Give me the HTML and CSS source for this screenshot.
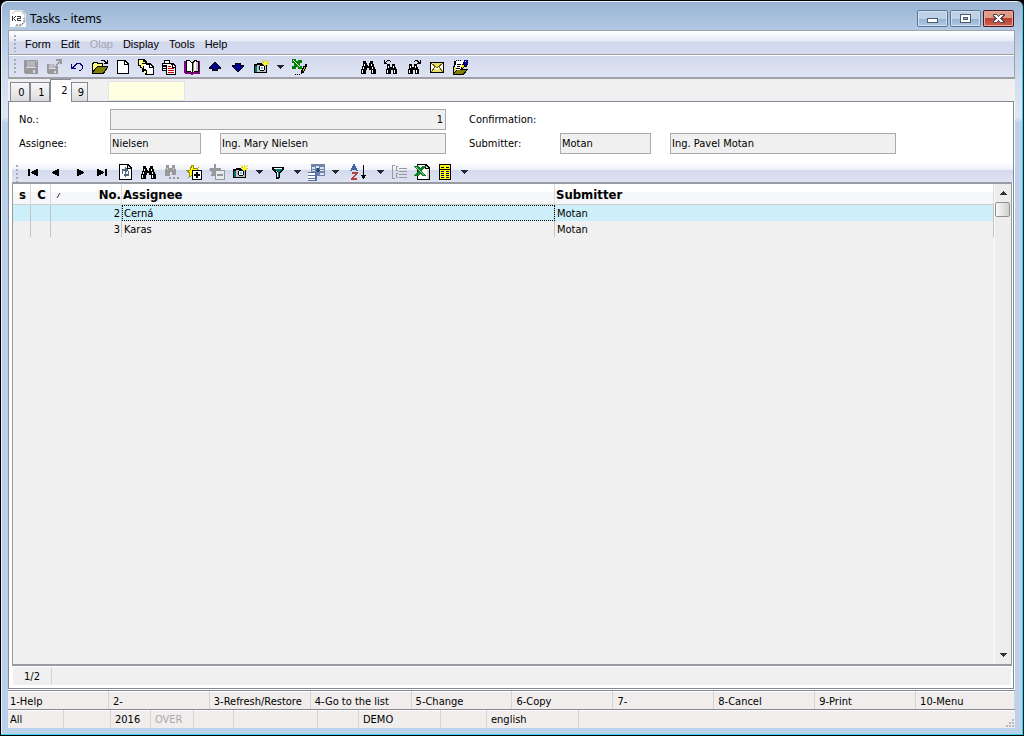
FILE: index.html
```html
<!DOCTYPE html>
<html lang="en">
<head>
<meta charset="utf-8">
<title>Tasks - items</title>
<link rel="stylesheet" href="styles.css">
</head>
<body>
<svg class="sprite" aria-hidden="true">
  <symbol id="save"><path fill="#999" d="M1 1h14v14H2l-1-1z"/><path fill="#b4b6bd" d="M4 2h8v6H4z"/><path fill="#d8dcee" d="M3 8h10v1H3zM10 11h2v3h-2zM13 2h1v1h-1z"/></symbol>
  <symbol id="export"><path fill="#999" d="M1 5h8v2h3v8H2l-1-1zM10 0h6v5h-2V3l-4 4-1-1 4-4h-3z"/><path fill="#b9bcc8" d="M3 5h6v4H3z"/><path fill="#d8dcee" d="M3 9h7v1H3zM8 12h2v2H8z"/></symbol>
  <symbol id="undo"><path fill="#000080" d="M2 5h1v3h1V7h1V6h1V5h1V4h5v1h1v1h1v4h-1v1h-1v1h-2v-1h2v-1h1V7h-1V6h-1V5H8v1H7v1H6v1H5v1h2v1H2z"/></symbol>
  <symbol id="open"><path d="M0 4h1V3h5v1h5v3h5v1l-4 7H0z"/><path fill="#ffff80" d="M1 5h1V4h3v1h5v2H5L1 12z"/><path fill="#808000" d="M5 8h10l-4 6H1z"/><path d="M9 1h4v1h1v1h1V1h1v4h-4V4h1V3h-1V2H9z"/></symbol>
  <symbol id="new"><path d="M2 1h8l4 4v10H2z"/><path fill="#fff" d="M3 2h6v4h4v8H3z"/><path fill="#fff" d="M10 3l2 2h-2z"/></symbol>
  <symbol id="copy"><path d="M0 0h6l3 3v1h3l4 4v8H7v-3H4V9H2V7H0z"/><path fill="#ffff80" d="M1 1h4v2h2v1H4v4H3V6H1zM4 5h3v2H5v5h3v2H6v-2H5V9H4z"/><path fill="#fff" d="M8 6h3v3h4v6H9v-4H8zM12 6l2 2h-2zM6 5h2v5H6z"/></symbol>
  <symbol id="paste"><path d="M1 4h2V1h6v3h3l3 3v9H5v-4H1z"/><path fill="#fff" d="M2 5h8v2H8v4H6V6H2zM4 2h4v2H4zM6 6h5v3h3v6H6zM2 8h3v3H2zM12 6l2 2h-2z"/><path fill="#d00000" d="M7 7h3v1H7zM7 9h6v1H7zM7 11h6v1H7zM7 13h6v1H7z"/><path d="M2 6h3v1H2zM2 9h3v1H2z"/></symbol>
  <symbol id="book"><path fill="#800080" d="M0 2h2v11h5l1 1 1-1h6V2h1v13h-6l-2 1-2-1H1l-1-1z"/><path d="M2 1h3l3 2 3-2h2v1h2v11h-5l-2 1-2-1H2z"/><path fill="#fff" d="M3 2h2l3 2v9l-2-1H3zM9 4l2-2h1v10h-1l-2 1z"/><path fill="#c8c8c8" d="M12 3h2v9h-2z"/><path fill="#a0a060" d="M9 4h1v8H9z"/></symbol>
  <symbol id="up"><path d="M7 3h2v1h1v1h1v1h1v1h1v1h1v2h-3v2H5v-2H2V8h1V7h1V6h1V5h1V4h1z"/><path fill="#000090" d="M7 4h2v1h1v1h1v1h1v1h1v1h-3v2H6V9H3V8h1V7h1V6h1V5h1z"/></symbol>
  <symbol id="down"><path d="M5 4h6v2h3v2h-1v1h-1v1h-1v1h-1v1H9v1H7v-1H6v-1H5v-1H4V9H3V8H2V6h3z"/><path fill="#000090" d="M6 5h4v2h3v1h-1v1h-1v1h-1v1H9v1H7v-1H6v-1H5V9H4V8H3V7h3z"/></symbol>
  <symbol id="camera"><path d="M1 5h3V4h5v1h5v9H1z"/><path fill="#007878" d="M2 7h2v6H2z"/><path fill="#c0c0c0" d="M4 6h9v7H4z"/><path d="M6 7h1V6h4v1h1v4h-1v1H7v-1H6z"/><path fill="#fff" d="M7 7h4v4H7z"/><path fill="#66c8d8" d="M8 8h2v2H8z"/><path fill="#e0d000" d="M9 1h1v1h1v1h1V1h1v2h1V2h1V1h1v1h-1v1h-1v1h2v1h-2v1h1v1h-1V6h-1v1h-1V5h-1v1h-1V5h1V4H9V3h1V2H9z"/><path fill="#ff0" d="M11 3h3v3h-3z"/></symbol>
  <symbol id="check-excel"><path fill="#008000" d="M1 0h4v2h2V1h4v3H9v3h2v3H7V8H5v2H1V7h2V4H1z"/><path fill="#fff" d="M2 1h1v1h1v1h1v1h1v1h1v1h1v1h1v1H8V7H7V6H6V5H5V4H4V3H3V2H2z"/><path d="M14 5h2v3h-1v2h-1v2h-1v2h-2v1h-1v-4h1V9h1V7h2zM4 15h1v1H4zM6 15h1v1H6zM8 15h1v1H8z"/><path fill="#e6c800" d="M13 8h1v2h-1v2h-1v-2h1z"/></symbol>
  <symbol id="find"><path d="M3 2h3v2h1v2h2V4h1V2h3v3h1v3h1v2h1v5h-5v-4H9V9H7v2H6v4H1v-5h1V7h1z"/><path fill="#fff" d="M4 5h1v2H4zM3 8h1v2H3zM2 11h1v3H2zM11 5h1v2h-1zM12 8h1v2h-1zM12 11h1v3h-1zM8 6h1v1H8z"/></symbol>
  <symbol id="find-prev"><path d="M4 5h3v3h2V5h3v3h1v2h1v5h-4v-4H8v4H3v-5h1z"/><path fill="#fff" d="M5 7h1v2H5zM4 11h1v3H4zM10 7h1v2h-1zM11 11h1v3h-1z"/><path d="M1 1h1v2h1V2h1V1h3v1h1v1H7V2H4v1H3v1h1v1H1z"/></symbol>
  <symbol id="find-next"><path d="M3 5h3v3h2V5h3v3h1v2h1v5H9v-4H7v4H2v-5h1z"/><path fill="#fff" d="M4 7h1v2H4zM3 11h1v3H3zM9 7h1v2H9zM10 11h1v3h-1z"/><path d="M14 1h1v4h-4V4h1V3h-1V2H9v1H8V2h1V1h3v1h1v1h1z"/></symbol>
  <symbol id="mail"><path d="M1 3h14v11H1z"/><path fill="#fff" d="M2 4h12v9H2z"/><path fill="#e8dc70" d="M3 4h10L8 9zM2 12l3-3 3 2 3-2 3 3v1H2z"/><path fill="none" stroke="#706000" d="M2 4l6 5 6-5M2 13l4-5M14 13l-4-5"/></symbol>
  <symbol id="notes"><path d="M2 2h9v8h5l-4 6H1V7h1z"/><path fill="#fff" d="M4 2h7v8L5 11H3z"/><path fill="#e6d85a" d="M2 8h2v3l-2 3z"/><path fill="#808000" d="M5 11h9l-3 4H2z"/><path d="M4 1h1v1H4zM6 1h1v1H6zM8 1h1v1H8zM5 5h4v1H5zM5 7h3v1H5zM4 9h4v1H4zM11 3h4v5h-3l-2 2-2-1 2-2z"/><path fill="#ffe000" d="M9 7l2-2 1 2-2 2z"/><path fill="#000090" d="M12 1h4v5h-4z"/><path fill="#fff" d="M13 2h1v1h-1z"/></symbol>
  <symbol id="caret"><path fill="#202830" d="M1 2h7v1H7v1H6v1H5v1H4V5H3V4H2V3H1z"/></symbol>
  <symbol id="first"><path d="M3 5h2v7H3zM6 8h1V7h2V6h2V5h2v7h-2v-1H9v-1H7V9H6z"/></symbol>
  <symbol id="prev"><path d="M4 8h1V7h2V6h2V5h2v7H9v-1H7v-1H5V9H4z"/></symbol>
  <symbol id="next"><path d="M13 8h-1V7h-2V6H8V5H6v7h2v-1h2v-1h2V9h1z"/></symbol>
  <symbol id="last"><path d="M13 5h-2v7h2zM10 8H9V7H7V6H5V5H3v7h2v-1h2v-1h2V9h1z"/></symbol>
  <symbol id="refresh"><path d="M2 0h9l4 4v12H2z"/><path fill="#fff" d="M3 1h7v4h4v10H3z"/><path fill="#d8e0e8" d="M11 2l2 2h-2z"/><path fill="#54687c" d="M5 5h3V3l3 3-3 3V7H6v3H5zM12 7v5H9v2l-3-3 3-3v2h2V7z"/></symbol>
  <symbol id="find-more"><path fill="#999" d="M3 1h3v3h3V1h3v4h1v6h-4V8H7v4H2V5h1zM6 13h2v2H6zM10 13h2v2h-2zM14 13h2v2h-2z"/><path fill="#c4c8d4" d="M4 4h1v2H4zM10 4h1v2h-1z"/></symbol>
  <symbol id="star-add"><path fill="#ff0" stroke="#a09000" d="M6 1h1v4l5-1-2 4 2 4-5-1-4 2 1-4-4-3h4z"/><path fill="#fff" stroke="#000" d="M6.500 6.500h9v9h-9z"/><path d="M8 10h2V8h2v2h2v2h-2v2h-2v-2H8z"/></symbol>
  <symbol id="star-remove"><path fill="#999" d="M5 0h2v4h5v2h4v10H6v-4H2l1-3-3-3 1-2h4z"/><path fill="#e8eaf2" d="M7 7h8v8H7z"/><path fill="#999" d="M8 10h6v2H8z"/></symbol>
  <symbol id="filter"><path d="M2 3h12v3h-1v1h-1v1h-1v1h-1v5H9v1H6V9H5V8H4V7H3V6H2z"/><path fill="#fff" d="M4 4h8v1H4zM6 7h1v1h1v5H7V8H6z"/><path fill="#008080" d="M5 5h7v1h-1v1h-1v1H9v5H8V7H6V6H5z"/></symbol>
  <symbol id="forms"><path fill="#7182a8" d="M3 0h14v12H3z"/><path fill="#dbe6f5" d="M4 3h3v2H4zM8 2h3v2H8zM12 3h4v2h-4zM12 6h4v1h-4zM12 9h4v2h-4zM4 6h3v1H4z"/><path fill="#1a4770" d="M9 4h2v2h1v1h-1v1H9V7H8V6h1z"/><path fill="#5770a8" d="M0 8h9v9H0z"/><path fill="#fff" d="M0 9h7v2H0zM0 12h7v2H0zM0 15h7v1H0z"/></symbol>
  <symbol id="sort"><path fill="none" stroke="#4166a8" stroke-width="1.500" d="M1 7l3-6 3 6M2 5h4"/><path fill="none" stroke="#b04038" stroke-width="1.500" d="M2 9h5l-5 6h5"/><path d="M13 1h1v10h2l-2 4h-1l-2-4h2z"/></symbol>
  <symbol id="outline"><path fill="none" stroke="#999" d="M4 1.500H1.500v13H4M7 2.500H5.500v4H7M7 9.500H5.500v4H7M8 4.500h8M8 7.500h8M8 10.500h8M8 13.500h8"/></symbol>
  <symbol id="excel"><path d="M3 0h9l4 4v12H3z"/><path fill="#fff" d="M4 1h7v4h4v10H4z"/><path fill="#d8d8d8" d="M12 2l2 2h-2zM13 6h2v9h-2z"/><path fill="#117d28" d="M0 2h4l2 2 2-2h4L8 7l4 5H8l-2-2-2 2H0l4-5z"/><path fill="#9bd39b" d="M2 3h1l7 8H9z"/></symbol>
  <symbol id="columns"><path d="M2 0h12v16H2z"/><path fill="#ff0" d="M3 1h10v14H3z"/><path d="M4 3h3v1H4zM9 3h3v1H9zM3 5h10v1H3z"/><path fill="#000080" d="M4 7h3v1H4zM9 7h3v1H9zM4 9h3v1H4zM9 9h3v1H9zM4 11h3v1H4zM9 11h3v1H9zM4 13h3v1H4zM9 13h3v1H9z"/></symbol>
</svg>

<div class="window">
  <header class="titlebar">
    <svg class="app-icon" viewBox="0 0 16 17"><path fill="#fff" d="M0 0h12l4 4v13H0z"/><path fill="none" stroke="#bbb" d="M2 4l3-3h6l4 4v7l-4 4H5"/><path fill="none" stroke="#666" stroke-dasharray="2 1" d="M6 15h5l3-3V8"/><path fill="#ccc" d="M12 0l4 4h-4z"/><path fill="none" stroke="#333" d="M2.500 6v5M6 6L3.500 8.500 6 11M7 6.500h3.500v2h-3v2H11"/></svg>
    <h1 class="title">Tasks - items</h1>
    <div class="window-buttons">
      <button class="win-btn" aria-label="Minimize"><svg viewBox="0 0 31 17"><path fill="#fff" stroke="#4c5a6b" d="M10.500 8.500h10v4h-10z"/></svg></button>
      <button class="win-btn" aria-label="Maximize"><svg viewBox="0 0 31 17"><path fill="#fff" stroke="#4c5a6b" d="M10.500 4.500h10v8h-10z"/><path fill="#8fb0d3" stroke="#4c5a6b" d="M13.500 7.500h4v2h-4z"/></svg></button>
      <button class="win-btn close" aria-label="Close"><svg viewBox="0 0 31 17"><path fill="#fff" stroke="#554852" d="M10 4.500h3.500l2 2 2-2H21v1l-3 3 3 3v1h-3.500l-2-2-2 2H10v-1l3-3-3-3z"/></svg></button>
    </div>
  </header>

  <div class="client">
    <nav class="menu">
      <button>Form</button><button>Edit</button><button disabled>Olap</button><button>Display</button><button>Tools</button><button>Help</button>
    </nav>
    <div class="toolbar main-tools">
      <button class="tool" aria-label="Save"><svg><use href="#save"/></svg></button>
      <button class="tool" aria-label="Export"><svg><use href="#export"/></svg></button>
      <button class="tool" aria-label="Undo"><svg><use href="#undo"/></svg></button>
      <button class="tool" aria-label="Open"><svg><use href="#open"/></svg></button>
      <button class="tool" aria-label="New"><svg><use href="#new"/></svg></button>
      <button class="tool" aria-label="Copy"><svg><use href="#copy"/></svg></button>
      <button class="tool" aria-label="Paste"><svg><use href="#paste"/></svg></button>
      <button class="tool" aria-label="Book"><svg><use href="#book"/></svg></button>
      <button class="tool" aria-label="Up"><svg><use href="#up"/></svg></button>
      <button class="tool" aria-label="Down"><svg><use href="#down"/></svg></button>
      <button class="tool" aria-label="Snapshot"><svg><use href="#camera"/></svg></button>
      <button class="drop" aria-label="Snapshot options"><svg><use href="#caret"/></svg></button>
      <button class="tool" aria-label="Edit in Excel"><svg><use href="#check-excel"/></svg></button>
      <button class="tool group-start" aria-label="Find"><svg><use href="#find"/></svg></button>
      <button class="tool" aria-label="Find previous"><svg><use href="#find-prev"/></svg></button>
      <button class="tool" aria-label="Find next"><svg><use href="#find-next"/></svg></button>
      <button class="tool" aria-label="Mail"><svg><use href="#mail"/></svg></button>
      <button class="tool" aria-label="Notes"><svg><use href="#notes"/></svg></button>
    </div>

    <div class="tabs">
      <button class="tab">0</button><button class="tab">1</button><button class="tab active">2</button><button class="tab last">9</button>
      <input class="quick" aria-label="Quick search">
    </div>

    <main class="panel">
      <form class="fields">
        <label for="no">No.:</label><input id="no" class="wide number" value="1" readonly>
        <label class="second">Confirmation:</label>
        <label class="new-row" for="assignee">Assignee:</label><input id="assignee" value="Nielsen" readonly><input aria-label="Assignee name" value="Ing. Mary Nielsen" readonly>
        <label class="second" for="submitter">Submitter:</label><input id="submitter" value="Motan" readonly><input aria-label="Submitter name" value="Ing. Pavel Motan" readonly>
      </form>

      <div class="toolbar grid-tools">
        <button class="tool" aria-label="First"><svg><use href="#first"/></svg></button>
        <button class="tool" aria-label="Previous"><svg><use href="#prev"/></svg></button>
        <button class="tool" aria-label="Next"><svg><use href="#next"/></svg></button>
        <button class="tool" aria-label="Last"><svg><use href="#last"/></svg></button>
        <button class="tool" aria-label="Refresh"><svg><use href="#refresh"/></svg></button>
        <button class="tool" aria-label="Find"><svg><use href="#find"/></svg></button>
        <button class="tool" aria-label="Find more"><svg><use href="#find-more"/></svg></button>
        <button class="tool" aria-label="Add mark"><svg><use href="#star-add"/></svg></button>
        <button class="tool" aria-label="Remove mark"><svg><use href="#star-remove"/></svg></button>
        <button class="tool" aria-label="Snapshot"><svg><use href="#camera"/></svg></button>
        <button class="drop" aria-label="Snapshot options"><svg><use href="#caret"/></svg></button>
        <button class="tool" aria-label="Filter"><svg><use href="#filter"/></svg></button>
        <button class="drop" aria-label="Filter options"><svg><use href="#caret"/></svg></button>
        <button class="tool" aria-label="Forms"><svg><use href="#forms"/></svg></button>
        <button class="drop" aria-label="Forms options"><svg><use href="#caret"/></svg></button>
        <button class="tool sort" aria-label="Sort"><svg><use href="#sort"/></svg></button>
        <button class="drop" aria-label="Sort options"><svg><use href="#caret"/></svg></button>
        <button class="tool" aria-label="Outline"><svg><use href="#outline"/></svg></button>
        <button class="tool" aria-label="Excel"><svg><use href="#excel"/></svg></button>
        <button class="tool" aria-label="Columns"><svg><use href="#columns"/></svg></button>
        <button class="drop" aria-label="Columns options"><svg><use href="#caret"/></svg></button>
      </div>

      <div class="grid">
        <div class="grid-body">
          <table>
            <colgroup><col class="col-s"><col class="col-c"><col class="col-no"><col class="col-assignee"><col></colgroup>
            <thead>
              <tr><th class="mid">s</th><th class="mid">C</th><th class="no-cell"><div class="no-head"><svg class="sort-mark" viewBox="0 0 8 8"><path fill="none" stroke="#fff" d="M4 2l3 5H1"/><path fill="none" stroke="#333" d="M1 7l3-5"/></svg><span>No.</span></div></th><th>Assignee</th><th>Submitter</th></tr>
            </thead>
            <tbody>
              <tr class="selected"><td></td><td></td><td class="num">2</td><td class="focus">Cerná</td><td>Motan</td></tr>
              <tr><td></td><td></td><td class="num">3</td><td>Karas</td><td>Motan</td></tr>
            </tbody>
          </table>
        </div>
        <div class="scrollbar">
          <button class="arrow" aria-label="Scroll up"><svg viewBox="0 0 8 8"><path fill="#333" d="M0 6l4-4 4 4z"/></svg></button>
          <div class="thumb"></div>
          <button class="arrow bottom" aria-label="Scroll down"><svg viewBox="0 0 8 8"><path fill="#333" d="M0 2h8L4 6z"/></svg></button>
        </div>
      </div>
      <div class="counter"><span>1/2</span></div>
    </main>

    <div class="keys">
      <button>1-Help</button><button>2-</button><button>3-Refresh/Restore</button><button>4-Go to the list</button><button>5-Change</button><button>6-Copy</button><button>7-</button><button>8-Cancel</button><button>9-Print</button><button>10-Menu</button>
    </div>
    <footer class="status">
      <span>All</span><span></span><span>2016</span><span class="off">OVER</span><span></span><span></span><span></span><span>DEMO</span><span></span><span>english</span>
      <span class="grip-cell"><svg class="grip" viewBox="0 0 9 9"><path fill="#bbb" d="M6 0h2v2H6zM3 3h2v2H3zM6 3h2v2H6zM0 6h2v2H0zM3 6h2v2H3zM6 6h2v2H6z"/></svg></span>
    </footer>
  </div>
</div>
</body>
</html>
```
FILE: styles.css
```css
* { box-sizing: border-box; }

body {
  margin: 0;
  background: #000;
  color: #000;
  font: 11px/14px "DejaVu Sans Condensed", "DejaVu Sans", sans-serif;
}

button, input { font: inherit; color: inherit; }
button { border: 0; background: none; padding: 0; margin: 0; }
.sprite { position: absolute; width: 0; height: 0; }
svg { display: block; shape-rendering: crispEdges; }
symbol, .tool svg { overflow: visible; }

.window {
  display: flex;
  flex-direction: column;
  height: 100vh;
  padding: 0 8px 7px 7px;
  border: 1px solid #000;
  border-right-color: #102028;
  border-radius: 7px 7px 0 0;
  box-shadow: inset -1px -1px #35d0ee, inset 1px 1px #e6f0fa;
  background: linear-gradient(#98b3d1 0, #b3cae4 30px, #cfdff0 80px, #dce8f5 116px, #b9d1ea 122px);
}

.titlebar { display: flex; align-items: center; height: 29px; flex: none; padding: 5px 1px 0 2px; }
.app-icon { width: 16px; height: 17px; shape-rendering: auto; }
.title { flex: 1; margin: 0 0 0 4px; padding-top: 2px; font: 12px/16px "Noto Sans", sans-serif; }
.window-buttons { display: flex; gap: 2px; }
.win-btn {
  width: 31px;
  height: 17px;
  border-radius: 2px;
  box-shadow: inset 0 0 0 1px #5c7594, inset 0 0 0 2px #d3e2f2;
  background: linear-gradient(#bed1e6 0 50%, #93b0d0 50%, #b4cfe9);
}
.win-btn.close {
  box-shadow: inset 0 0 0 1px #4a1420, inset 0 0 0 2px #e6aaa0;
  background: linear-gradient(#e09a88 0 45%, #b83c2a 45%, #d06850);
}

.client { flex: 1; display: flex; flex-direction: column; min-height: 0; background: #f0f0f0; }

.menu, .toolbar { display: flex; flex: none; position: relative; }
.menu::before, .toolbar::before {
  content: "";
  position: absolute;
  left: 5px;
  top: 4px;
  bottom: 2px;
  width: 2px;
  background: repeating-linear-gradient(#a9adb8 0 2px, transparent 2px 4px);
}
.menu {
  height: 24px;
  padding: 3px 0 0 16px;
  gap: 10px;
  border: 1px solid #a0a0a8;
  border-bottom: 0;
  background: linear-gradient(#fff 0, #e6eaf5 10px, #d3d9ed 11px, #d5dbee);
  font-family: "Liberation Sans", Arial, sans-serif;
}
.menu button:disabled { color: #a3a6b3; }
.main-tools {
  height: 25px;
  padding: 2px 0 0 11px;
  border: 1px solid #a0a0a8;
  border-bottom-width: 2px;
  background: linear-gradient(#fff 0 1px, #d3d9ed 1px, #dfe4f3);
}
.tool, .drop { display: flex; align-items: center; justify-content: center; }
.tool { width: 23px; padding-right: 1px; }
.tool svg { width: 16px; height: 16px; }
.drop { width: 15px; padding-right: 1px; }
.drop svg { width: 8px; height: 8px; }
.group-start { margin-left: 46px; }
.sort { width: 30px; }

.tabs { display: flex; align-items: flex-end; flex: none; height: 22px; padding-left: 2px; }
.tab {
  width: 20px;
  height: 19px;
  padding: 2px 0 0 3px;
  border: 1px solid #858995;
  border-bottom: 0;
  background: linear-gradient(#f8f8f8, #dcdcdc);
}
.tab.active { width: 21px; height: 23px; margin-bottom: -1px; padding: 0 0 0 7px; background: #fff; position: relative; border-right: 0; }
.tab.last { width: 17px; }
.quick { width: 77px; height: 20px; margin-left: 20px; padding: 2px; border: 1px solid #e2e3ea; background: #ffffe1; }

.panel {
  flex: 1;
  display: flex;
  flex-direction: column;
  min-height: 0;
  margin: 0 1px 1px 0;
  padding: 7px 0 3px;
  border: 1px solid #858995;
  background: #fff;
  box-shadow: 1px 1px #fff;
}
.fields {
  display: grid;
  grid-template-columns: 72px 91px 226px 76px 91px 226px;
  column-gap: 19px;
  row-gap: 3px;
  padding-left: 10px;
  margin: 0;
}
.fields label { align-self: center; }
.fields .second { padding-left: 4px; }
.fields .new-row { grid-column-start: 1; }
.fields input { width: 100%; height: 21px; padding: 0 2px 0 1px; border: 1px solid #aaa; background: #f0f0f0; outline: 0; }
.fields .wide { grid-column: span 2; }
.fields .number { text-align: right; }

.grid-tools {
  height: 20px;
  margin: 8px 0 0 3px;
  padding: 0 0 0 10px;
  background: linear-gradient(#fff 0, #eef0f8 8px, #d3d9ed 8px, #dfe4f3);
}
.grid-tools::before { left: 4px; top: 3px; bottom: 0; }
.grid {
  flex: 1;
  display: flex;
  min-height: 0;
  margin: 0 1px 0 3px;
  border: 1px solid #999ba3;
  border-top-width: 2px;
  border-bottom-width: 2px;
  background: #f0f0f0;
}
.grid-body { flex: 1; min-width: 0; overflow: hidden; }
table { width: 100%; table-layout: fixed; border-collapse: separate; border-spacing: 0; }
.col-s { width: 18px; }
.col-c { width: 20px; }
.col-no { width: 71px; }
.col-assignee { width: 433px; }
th, td { padding: 0 2px; border-right: 1px solid #c4c4c4; text-align: left; }
th {
  height: 21px;
  border-right-color: #dcdcdc;
  border-bottom: 1px solid #ccc;
  background: linear-gradient(#fff 0 8px, #f5f6f8 8px);
  font-size: 13px;
  line-height: 18px;
  padding: 2px 1px 0;
}
th.mid { text-align: center; padding-left: 2px; padding-right: 0; }
th.no-cell { padding-right: 0; }
.no-head { display: flex; align-items: center; justify-content: space-between; padding-left: 4px; }
.sort-mark { width: 8px; height: 8px; shape-rendering: auto; }
td { height: 16px; padding-top: 2px; line-height: 14px; }
.num { text-align: right; padding-right: 1px; }
.selected td { background: #cceffa; }
.selected .focus { outline: 1px dotted #000; outline-offset: -1px; }

.scrollbar { display: flex; flex-direction: column; width: 17px; border-left: 1px solid #fafafa; background: #ededed; }
.arrow { display: flex; align-items: center; justify-content: center; height: 18px; }
.arrow svg { width: 8px; height: 8px; }
.thumb { height: 15px; margin-right: 1px; border: 1px solid #929292; border-radius: 2px; background: linear-gradient(90deg, #fafafa, #d0d0d0); }
.arrow.bottom { margin-top: auto; }

.counter { height: 19px; margin: 0 2px 0 4px; flex: none; background: #f0f0f0; border-top: 1px solid #fff; }
.counter span { display: block; width: 39px; height: 18px; padding: 3px 0 0 11px; border-right: 1px solid #d4d4d4; }

.keys { display: grid; grid-template-columns: repeat(9, 101fr) 99fr; flex: none; height: 19px; border-top: 1px solid #858995; background: #f0edec; }
.keys button { text-align: left; padding: 3px 0 0 4px; border-right: 1px solid #d4d4d4; box-shadow: inset 0 1px #fff; white-space: nowrap; }
.keys button:first-child { padding-left: 2px; }
.status {
  display: grid;
  grid-template-columns: 56px 47px 40px 43px 40px 84px 41px 82px 46px 92px 1fr;
  flex: none;
  height: 19px;
  border-top: 1px solid #858995;
  background: #f0edec;
}
.status span { padding: 3px 0 0 4px; border-right: 1px solid #d4d4d4; box-shadow: inset 0 1px #fff; }
.status span:first-child { padding-left: 2px; }
.status .off { color: #aaa; }
.status .grip-cell { display: flex; align-items: flex-end; justify-content: flex-end; border: 0; }
.grip { width: 9px; height: 9px; }
```
